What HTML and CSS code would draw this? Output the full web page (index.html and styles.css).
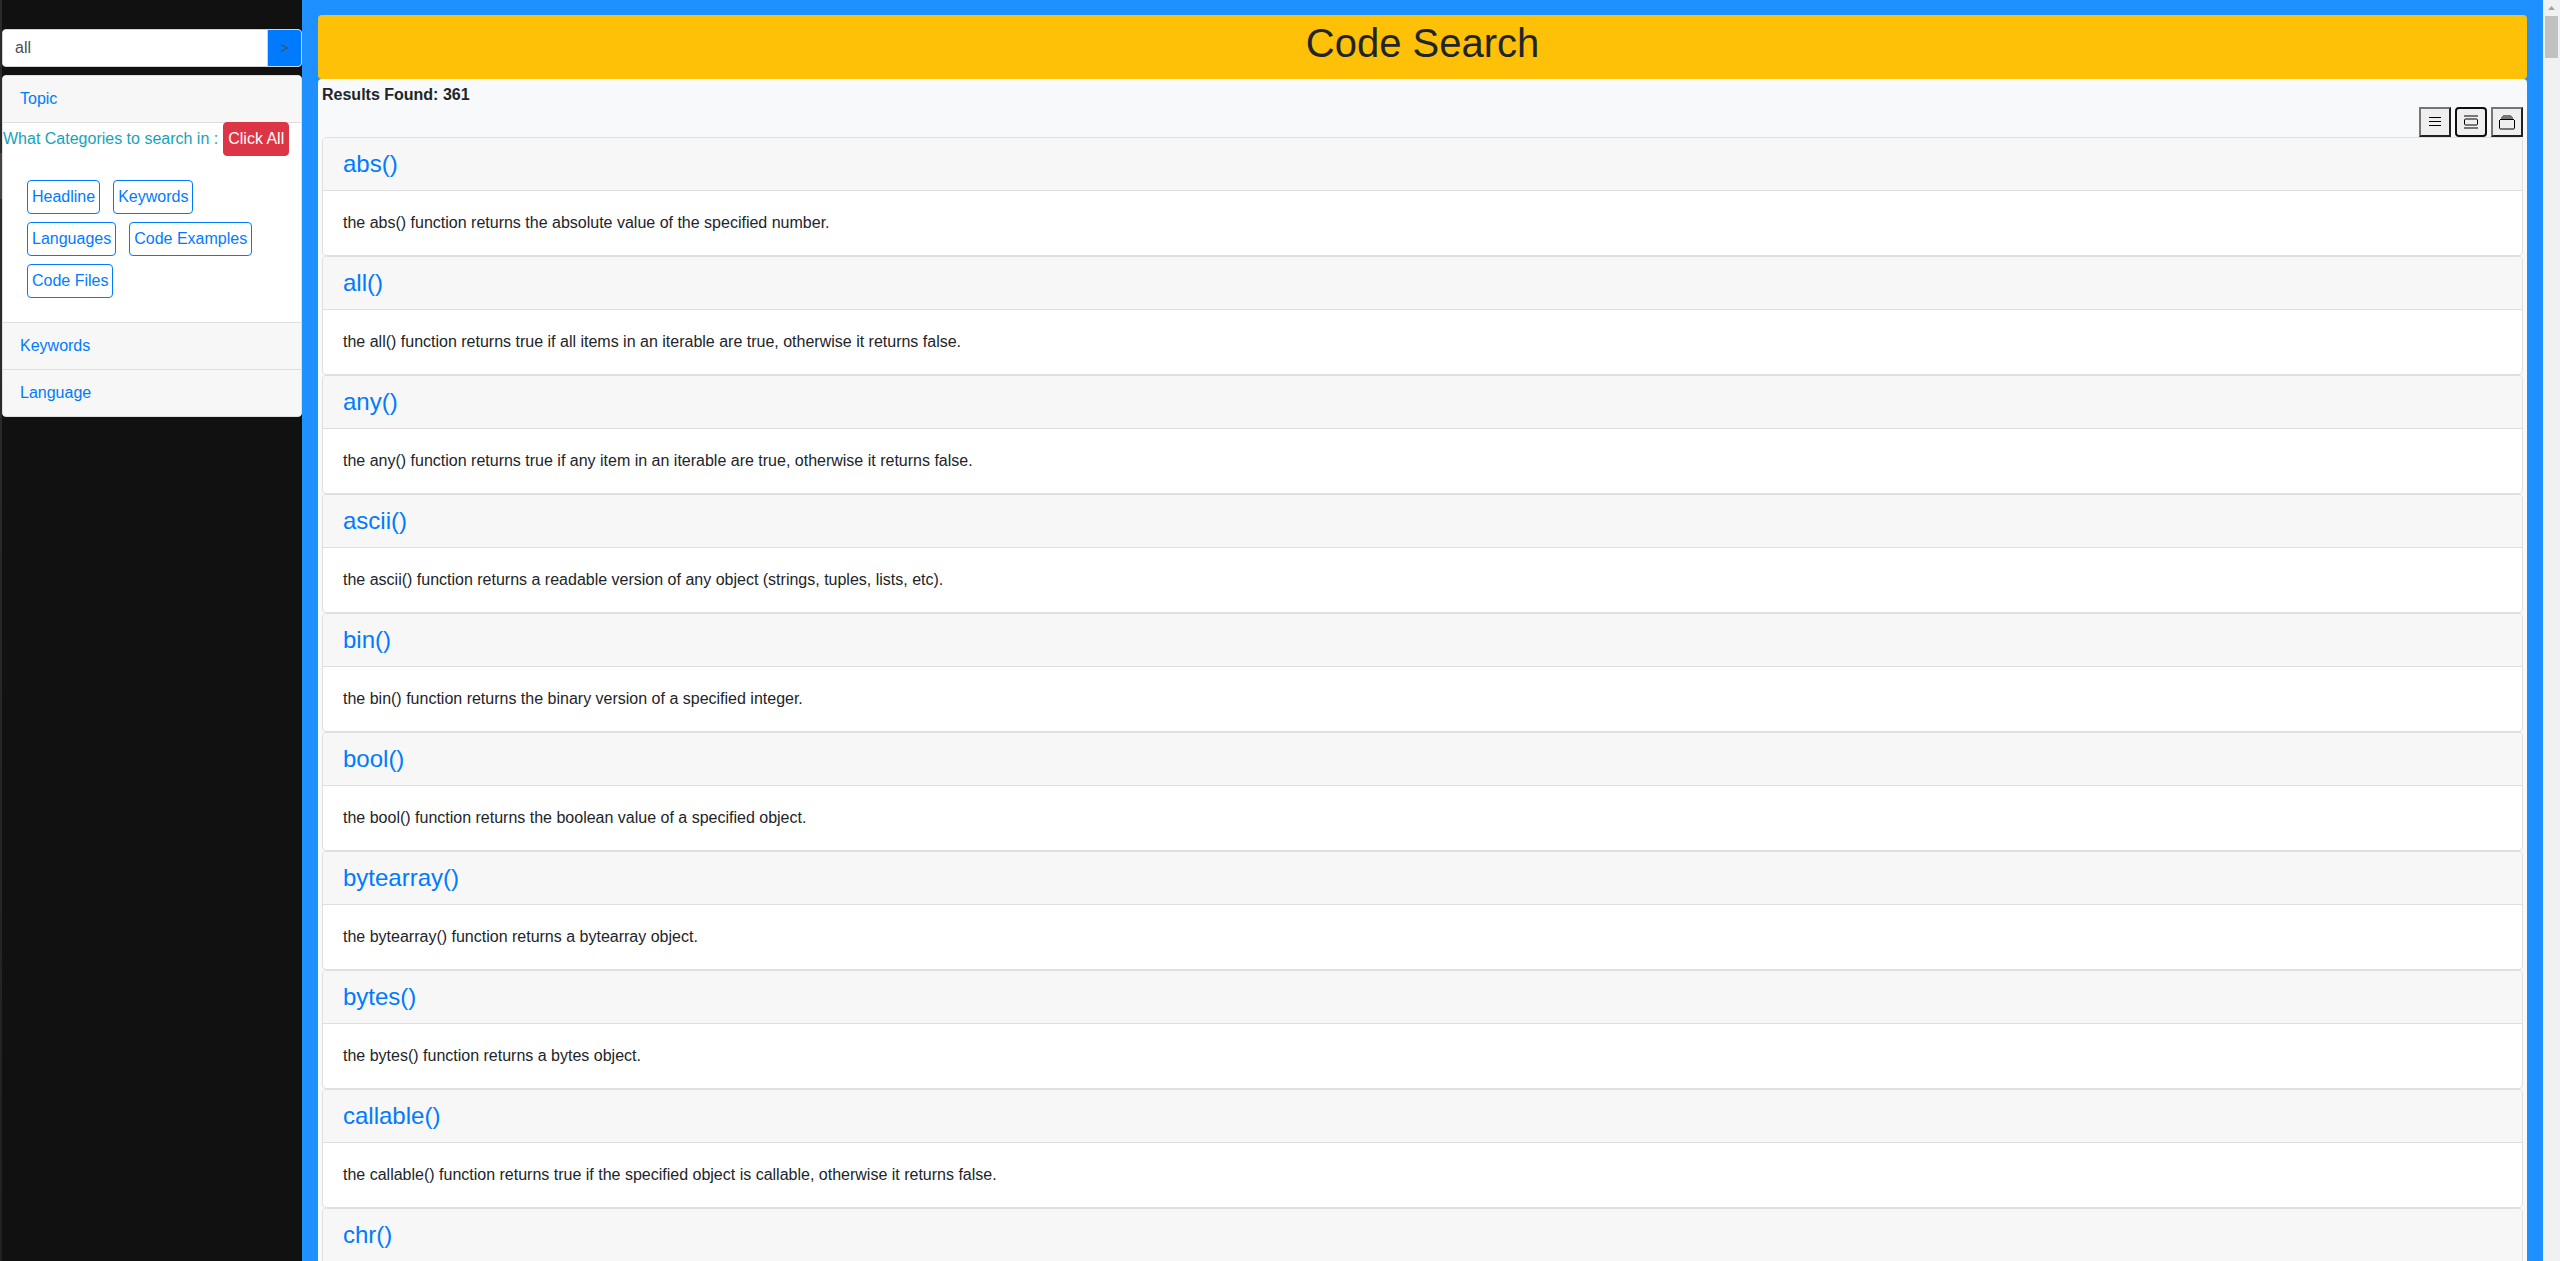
FILE: index.html
```html
<!DOCTYPE html>
<html lang="en">
<head>
<meta charset="utf-8">
<title>Code Search</title>
<link rel="stylesheet" href="styles.css">
</head>
<body>
<div class="app">
  <div class="edge"></div>
  <aside class="sidebar">
    <form class="search">
      <input class="search-input" type="text" value="all" aria-label="Search">
      <button class="search-go" type="button">&gt;</button>
    </form>
    <div class="accordion">
      <div class="panel-head"><a href="#topic">Topic</a></div>
      <div class="panel-body" id="topic">
        <div class="prompt"><span>What Categories to search in :</span><button class="tag tag-all" type="button">Click All</button></div>
        <div class="tags">
          <button class="tag" type="button">Headline</button>
          <button class="tag" type="button">Keywords</button>
          <button class="tag" type="button">Languages</button>
          <button class="tag" type="button">Code Examples</button>
          <button class="tag" type="button">Code Files</button>
        </div>
      </div>
      <div class="panel-head"><a href="#keywords">Keywords</a></div>
      <div class="panel-head"><a href="#language">Language</a></div>
    </div>
  </aside>
  <main class="main">
    <h1 class="banner">Code Search</h1>
    <section class="results">
      <strong class="count">Results Found: 361</strong>
      <div class="views">
        <button class="view" type="button" aria-label="List view">
          <svg width="12" height="10" viewBox="0 0 12 10" shape-rendering="crispEdges"><path d="M0 0h12v1H0zM0 4h12v1H0zM0 8h12v1H0z" fill="#000"/></svg>
        </button>
        <button class="view view-active" type="button" aria-label="Card view">
          <svg width="14" height="14" viewBox="0 0 14 14"><path d="M0 0h14v2H0zM0 12h14v2H0zM1 3h12v2H1zM1 9h12v2H1z" fill="#777"/><path d="M0 5h1v4H0zM13 5h1v4h-1z" fill="#000"/><path d="M0 4h1v1H0zM13 4h1v1h-1zM0 9h1v1H0zM13 9h1v1h-1z" fill="#555"/></svg>
        </button>
        <button class="view" type="button" aria-label="Stack view">
          <svg width="16" height="15" viewBox="0 0 16 15"><path d="M4 0h8v1h1v1h1v2H2V2h1V1h1zM1 13h14v2H1z" fill="#777"/><path d="M1 4h14v1H1zM0 5h1v8H0zM15 5h1v8h-1z" fill="#000"/><path d="M0 13h1v1H0zM15 13h1v1h-1z" fill="#555"/></svg>
        </button>
      </div>
      <article class="card"><h4><a href="#abs">abs()</a></h4><p>the abs() function returns the absolute value of the specified number.</p></article>
      <article class="card"><h4><a href="#all">all()</a></h4><p>the all() function returns true if all items in an iterable are true, otherwise it returns false.</p></article>
      <article class="card"><h4><a href="#any">any()</a></h4><p>the any() function returns true if any item in an iterable are true, otherwise it returns false.</p></article>
      <article class="card"><h4><a href="#ascii">ascii()</a></h4><p>the ascii() function returns a readable version of any object (strings, tuples, lists, etc).</p></article>
      <article class="card"><h4><a href="#bin">bin()</a></h4><p>the bin() function returns the binary version of a specified integer.</p></article>
      <article class="card"><h4><a href="#bool">bool()</a></h4><p>the bool() function returns the boolean value of a specified object.</p></article>
      <article class="card"><h4><a href="#bytearray">bytearray()</a></h4><p>the bytearray() function returns a bytearray object.</p></article>
      <article class="card"><h4><a href="#bytes">bytes()</a></h4><p>the bytes() function returns a bytes object.</p></article>
      <article class="card"><h4><a href="#callable">callable()</a></h4><p>the callable() function returns true if the specified object is callable, otherwise it returns false.</p></article>
      <article class="card"><h4><a href="#chr">chr()</a></h4><p></p></article>
    </section>
  </main>
  <div class="scrollbar" aria-hidden="true">
    <svg width="17" height="16" viewBox="0 0 17 16"><path d="M5 10h7L8.500 6z" fill="#a3a3a3"/></svg>
    <div class="thumb"></div>
  </div>
</div>
</body>
</html>
```
FILE: styles.css
```css
* { box-sizing: border-box; }

body {
  margin: 0;
  font: 16px/24px "Liberation Sans", Arial, sans-serif;
  color: #212529;
  background: #111;
}

button, input { font: inherit; }
a { color: #007bff; text-decoration: none; }

.app {
  display: flex;
  height: 100vh;
  overflow: hidden;
}

.edge {
  width: 2px;
  background: linear-gradient(#2b2b2b 0 153px, #444 153px 199px, #2b2b2b 199px, #222 100%);
}

.sidebar {
  width: 300px;
  padding-top: 29px;
  background: #111;
}

.search {
  display: flex;
  height: 38px;
  margin-bottom: 8px;
  border: 1px solid #ced4da;
  border-radius: 4px;
  background: #fff;
  overflow: hidden;
}

.search-input {
  flex: 1;
  min-width: 0;
  padding: 0 12px;
  border: 0;
  color: #495057;
  background: #fff;
}

.search-go {
  width: 34px;
  padding: 0;
  border: 0;
  border-left: 1px solid #ced4da;
  color: #495057;
  background: #007bff;
  font-size: 14px;
}

.accordion {
  border: 1px solid #dfdfdf;
  border-radius: 4px;
  background: #fff;
  overflow: hidden;
}

.panel-head {
  padding: 11px 17px;
  border-bottom: 1px solid #dfdfdf;
  background: #f7f7f7;
}

.panel-head:last-child { border-bottom: 0; }
.panel-body { border-bottom: 1px solid #dfdfdf; }

.prompt {
  display: flex;
  align-items: baseline;
  gap: 5px;
  margin-top: -1px;
  color: #17a2b8;
}

.tags {
  display: flex;
  flex-wrap: wrap;
  gap: 8px 13px;
  padding: 24px;
}

.tag {
  padding: 4px;
  border: 1px solid #007bff;
  border-radius: 4px;
  color: #007bff;
  background: #fff;
}

.tag-all {
  border-color: #dc3545;
  color: #fff;
  background: #dc3545;
}

.main {
  flex: 1;
  padding: 15px 16px 0;
  background: #1e90ff;
}

.banner {
  margin: 0;
  padding: 4px 0 12px;
  border-radius: 4px;
  background: #ffc107;
  font-size: 40px;
  font-weight: 400;
  line-height: 48px;
  text-align: center;
}

.results {
  padding: 4px;
  border-radius: 4px;
  background: #f8f9fa;
}

.count { display: block; }

.views {
  display: flex;
  justify-content: flex-end;
  gap: 4px;
}

.view {
  display: flex;
  align-items: center;
  justify-content: center;
  width: 32px;
  height: 30px;
  padding: 0;
  border: 2px solid;
  border-color: #767676 #212121 #212121 #767676;
  background: #efefef;
}

.view-active {
  border-color: #101010;
  border-radius: 4px;
}

.card {
  border: 1px solid #dfdfdf;
  border-radius: 4px;
  background: #fff;
  overflow: hidden;
}

.card h4 {
  margin: 0;
  padding: 12px 20px;
  border-bottom: 1px solid #dfdfdf;
  background: #f7f7f7;
  font-size: 24px;
  font-weight: 400;
  line-height: 28px;
}

.card p {
  min-height: 24px;
  margin: 20px;
}

.scrollbar {
  width: 17px;
  background: #f1f1f1;
}

.scrollbar svg { display: block; }

.thumb {
  height: 42px;
  margin: 0 2px;
  background: #c1c1c1;
}
```
